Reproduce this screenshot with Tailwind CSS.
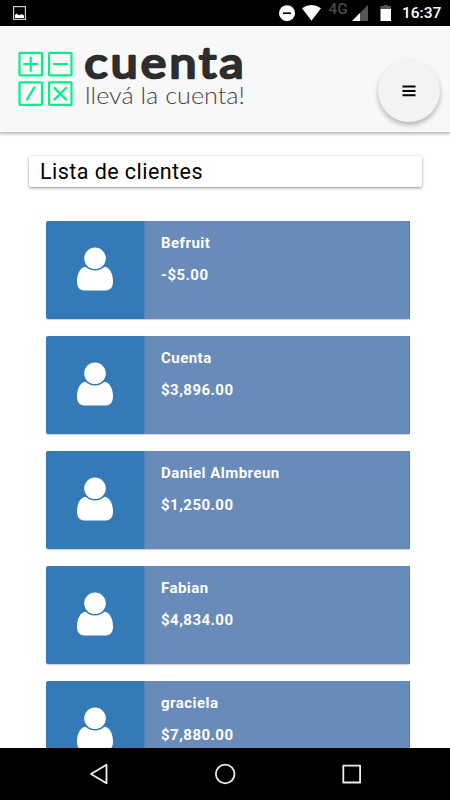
<!DOCTYPE html>
<html lang="es">
<head>
    <meta charset="UTF-8">
    <meta name="viewport" content="width=device-width, initial-scale=1.0">
    <title>Cuenta - Lista de clientes</title>
    <script src="https://cdn.jsdelivr.net/npm/@tailwindcss/browser@4"></script>
</head>
<body class="flex h-screen flex-col overflow-hidden bg-white font-[Roboto,sans-serif]">
    <!-- Status bar -->
    <div class="flex h-[26px] shrink-0 items-center justify-between bg-black pr-[9px] pl-[13px]">
        <svg class="h-[14px] w-[13px]" viewBox="0 0 13 14">
            <rect x=".6" y=".6" width="11.8" height="12.8" fill="none" stroke="#ccc" stroke-width="1.2"/>
            <path d="M2 12V9l1.5-1.5L5.5 9H7l1.5-1 2.5 1.5V12z" fill="#fff"/>
        </svg>
        <div class="flex items-center">
            <svg class="h-[26px] w-[120px]" viewBox="278 0 120 26">
                <circle cx="287" cy="13.2" r="8" fill="#fff"/>
                <path d="M283 13.2h8" stroke="#000" stroke-width="1.6"/>
                <path d="M302 8.3Q311.500 1.500 321 8.300L311.500 20.800z" fill="#fff"/>
                <text x="328.500" y="13.800" font-size="14" font-weight="500" textLength="19" lengthAdjust="spacingAndGlyphs" fill="#4a4a4a">4G</text>
                <path d="M368 5v16h-16z" fill="#555"/>
                <path d="M360 13v8h-8z" fill="#fff"/>
                <path d="M380.500 6h3.500V5h4v1h3v3h-10.500z" fill="#555"/>
                <path d="M380.500 9h10.500v12h-10.500z" fill="#fff"/>
            </svg>
            <span class="w-[43px] pl-[4px] text-[15.5px] leading-[28px] font-medium whitespace-nowrap text-white">16:37</span>
        </div>
    </div>

    <!-- Header -->
    <header class="relative z-10 flex h-[106px] shrink-0 justify-between bg-[#f8f8f8] pr-[10px] shadow-[0_1px_3px_1px_rgba(0,0,0,0.28)]">
        <svg class="h-[106px] w-[260px]" viewBox="0 26 260 106">
            <g fill="none" stroke="#05f08b" stroke-width="2.200">
                <rect x="19.500" y="52.800" width="22.500" height="22.500" rx=".8"/>
                <rect x="49" y="52.800" width="22.500" height="22.500" rx=".8"/>
                <rect x="19.500" y="82.300" width="22.500" height="22.500" rx=".8"/>
                <rect x="49" y="82.300" width="22.500" height="22.500" rx=".8"/>
                <path d="M24 64.200h13.500M30.700 57.500V71M54 64.200h13" stroke-linecap="round"/>
                <path d="M27 99.500l7.300-12M54.500 88l11.500 11.500M66 88L54.500 99.500" stroke-width="2.400" stroke-linecap="round"/>
            </g>
            <text transform="translate(84.500 78) scale(1.12 1)" font-family="Lato, sans-serif" font-size="43" font-weight="400" textLength="142" lengthAdjust="spacing" fill="#2d2d2d" stroke="#2d2d2d" stroke-width="2.600" stroke-linejoin="round">cuenta</text>
            <text x="85" y="103.500" font-family="Lato, sans-serif" font-size="23.500" font-weight="300" textLength="160" lengthAdjust="spacingAndGlyphs" fill="#444">llevá la cuenta!</text>
        </svg>
        <button class="mt-[34px] flex size-[62px] items-center justify-center rounded-full bg-[#f3f3f3] shadow-[0_3px_5px_rgba(0,0,0,0.28)]">
            <svg class="h-[12px] w-[14px]" viewBox="0 0 14 12">
                <path d="M.5 1.500h13M.5 6h13M.5 10.300h13" stroke="#000" stroke-width="2"/>
            </svg>
        </button>
    </header>

    <main class="min-h-0 flex-1 overflow-hidden">
        <h1 class="mt-[24px] mr-[28px] ml-[29px] h-[31px] rounded-[2px] bg-white pl-[11px] text-[21.5px] leading-[32px] tracking-[0.45px] text-black shadow-[0_1px_3px_rgba(0,0,0,0.45)]">Lista de clientes</h1>
        <div id="clientes" class="mt-[34px] mr-[40px] ml-[46px] flex flex-col gap-[17px]"></div>
    </main>

    <!-- Navigation bar -->
    <nav class="h-[52px] shrink-0 bg-black">
        <svg class="h-[52px] w-[450px]" viewBox="0 748 450 52" fill="none" stroke="#eee" stroke-width="1.800" stroke-linejoin="round">
            <path d="M106.500 764.800v18.400L91 774z"/>
            <circle cx="225.200" cy="774" r="9.300"/>
            <rect x="343.300" y="765.700" width="16.800" height="16.800"/>
        </svg>
    </nav>

    <script>
        const clientes = [
            { nombre: 'Befruit', saldo: '-$5.00' },
            { nombre: 'Cuenta', saldo: '$3,896.00' },
            { nombre: 'Daniel Almbreun', saldo: '$1,250.00' },
            { nombre: 'Fabian', saldo: '$4,834.00' },
            { nombre: 'graciela', saldo: '$7,880.00' }
        ];

        let html = '';
        clientes.forEach(cliente => {
            html += `<div class="flex h-[98px] shrink-0 rounded-[2px] shadow-[0_1px_1px_rgba(0,0,0,0.2)]">
                        <div class="flex w-[99px] justify-center rounded-l-[2px] border-r border-[#5084b9] bg-[#337ab7] pt-[26px]">
                            <svg class="h-[44px] w-[36px]" viewBox="0 0 36 44" fill="#fff">
                                <path d="M8.500 19.700C3 20.500 0 27 0 34.500 0 40 2.500 43.500 7 43.500h22c4.500 0 7-3.500 7-9 0-7.500-3-14-8.500-14.800C25 22 22 23.400 18 23.400S11 22 8.500 19.700z"/>
                                <circle cx="18" cy="11.300" r="10.800"/>
                            </svg>
                        </div>
                        <div class="flex-1 border-r border-[#5a80b4] bg-[#698bb9] pt-[12px] pl-[16px] text-[15px] leading-[21px] font-bold tracking-[0.47px] text-white">
                            <p>${cliente.nombre}</p>
                            <p class="mt-[11px]">${cliente.saldo}</p>
                        </div>
                    </div>`;
        });
        document.getElementById('clientes').innerHTML = html;
    </script>
</body>
</html>
